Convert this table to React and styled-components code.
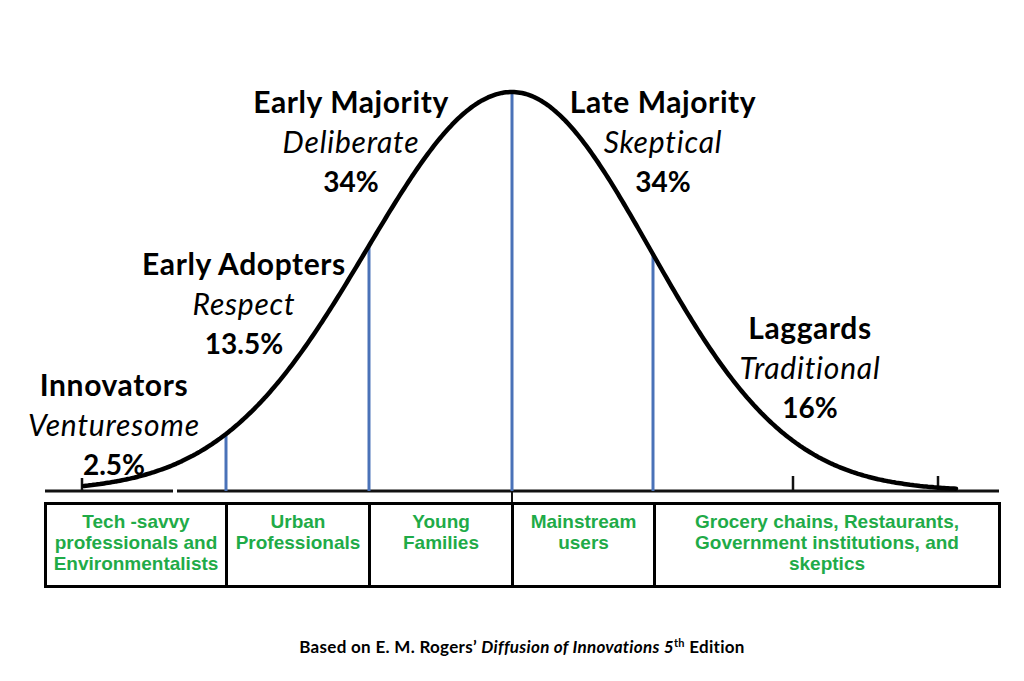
import React from 'react';
import styled, { createGlobalStyle } from 'styled-components';

const GlobalStyle = createGlobalStyle`
  html, body {
    margin: 0;
    padding: 0;
    background: #ffffff;
  }
  * {
    box-sizing: border-box;
  }
`;

const Page = styled.div`
  width: 1024px;
  height: 681px;
  background: #fff;
  display: flex;
  flex-direction: column;
  font-family: Lato, 'Open Sans', sans-serif;
  color: #000;
  overflow: hidden;
`;

const Chart = styled.div`
  position: relative;
  height: 502px;
  flex: none;
`;

const Label = styled.div`
  position: absolute;
  transform: translateX(-50%);
  display: flex;
  flex-direction: column;
  align-items: center;
  white-space: nowrap;
  line-height: 40px;
`;

const Title = styled.span`
  font-size: 30px;
  font-weight: 700;
  letter-spacing: 0.6px;
`;

const Trait = styled.span`
  font-size: 30px;
  font-style: italic;
  font-weight: 400;
  letter-spacing: 0.8px;
`;

const Share = styled.span`
  font-size: 28px;
  font-weight: 700;
`;

const Table = styled.div`
  margin-left: 44px;
  width: 957px;
  height: 86px;
  border: 3px solid #000;
  display: grid;
  grid-template-columns: 181px 143px 143px 142px 1fr;
  flex: none;
`;

const Cell = styled.div`
  border-right: ${(p) => (p.$last ? 'none' : '3px solid #000')};
  padding: 6px 2px 0;
  text-align: center;
  color: #1fab48;
  font-family: 'Liberation Sans', Arial, sans-serif;
  font-weight: 700;
  font-size: 19px;
  line-height: 21px;
`;

const Caption = styled.p`
  margin: 48px 0 0;
  text-align: center;
  padding-left: 20px;
  font-size: 17px;
  font-weight: 700;
  letter-spacing: 0.3px;
  em {
    font-style: italic;
  }
  sup {
    font-size: 11px;
    line-height: 0;
    vertical-align: 6px;
  }
`;

const MEAN = 512;
const BASE = 491;
const PEAK = 399;

const curveY = (x) => {
  const s = x < MEAN ? 145 : 138;
  const z = (x - MEAN) / s;
  return BASE - PEAK * Math.exp(-(z * z) / 2);
};

const curvePath = () => {
  const pts = [];
  for (let x = 84; x <= 956; x += 2) {
    pts.push(`${x},${curveY(x).toFixed(1)}`);
  }
  return 'M' + pts.join(' L');
};

const BellCurve = () => (
  <svg width="1024" height="502" viewBox="0 0 1024 502" style={{ display: 'block' }}>
    <line x1="45" y1={BASE} x2="173" y2={BASE} stroke="#111" strokeWidth="3" />
    <line x1="177" y1={BASE} x2="999" y2={BASE} stroke="#111" strokeWidth="3" />
    {[82, 793, 938].map((x) => (
      <line key={x} x1={x} y1={x === 82 ? 478 : 476} x2={x} y2={BASE} stroke="#111" strokeWidth="2.5" />
    ))}
    {[226, 369, 512, 653].map((x) => (
      <line key={x} x1={x} y1={curveY(x)} x2={x} y2={BASE} stroke="#4a72b8" strokeWidth="3" />
    ))}
    <line x1="512" y1={BASE} x2="512" y2="502" stroke="#111" strokeWidth="2" />
    <path d={curvePath()} fill="none" stroke="#000" strokeWidth="4.5" strokeLinecap="round" strokeLinejoin="round" />
  </svg>
);

const groups = [
  { title: 'Early Majority', trait: 'Deliberate', share: '34%', x: 351, y: 81 },
  { title: 'Late Majority', trait: 'Skeptical', share: '34%', x: 663, y: 81 },
  { title: 'Early Adopters', trait: 'Respect', share: '13.5%', x: 244, y: 243 },
  { title: 'Innovators', trait: 'Venturesome', share: '2.5%', x: 114, y: 364 },
  { title: 'Laggards', trait: 'Traditional', share: '16%', x: 810, y: 307 },
];

const segments = [
  'Tech -savvy professionals and Environmentalists',
  'Urban Professionals',
  'Young Families',
  'Mainstream users',
  'Grocery chains, Restaurants, Government institutions, and skeptics',
];

const App = () => (
  <>
    <GlobalStyle />
    <Page>
      <Chart>
        <BellCurve />
        {groups.map((g) => (
          <Label key={g.title} style={{ left: g.x, top: g.y }}>
            <Title>{g.title}</Title>
            <Trait>{g.trait}</Trait>
            <Share>{g.share}</Share>
          </Label>
        ))}
      </Chart>
      <Table>
        {segments.map((s, i) => (
          <Cell key={s} $last={i === segments.length - 1}>
            {s}
          </Cell>
        ))}
      </Table>
      <Caption>
        Based on E. M. Rogers’ <em>Diffusion of Innovations 5</em>
        <sup>th</sup> Edition
      </Caption>
    </Page>
  </>
);

export default App;
